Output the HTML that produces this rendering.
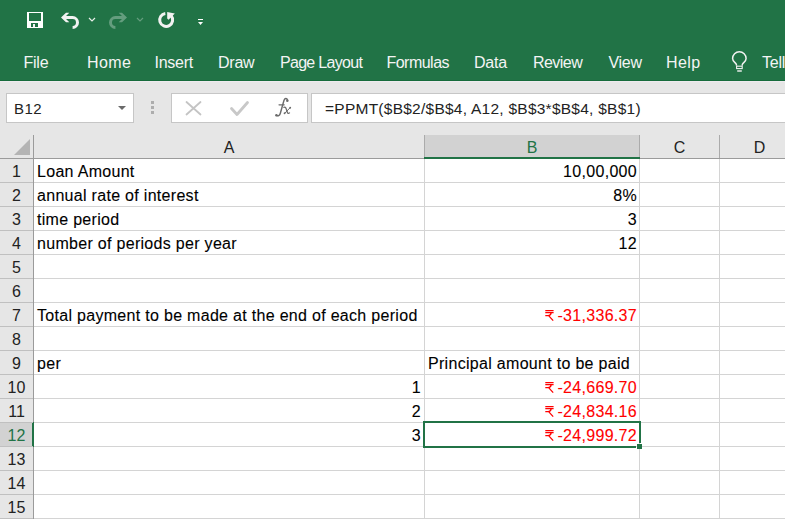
<!DOCTYPE html>
<html><head><meta charset="utf-8">
<style>
*{margin:0;padding:0;box-sizing:border-box}
html,body{width:785px;height:519px;overflow:hidden;background:#e6e6e6;font-family:"Liberation Sans",sans-serif;position:relative}
.a{position:absolute}
#rib{left:0;top:0;width:785px;height:80px;background:#217346}
#ribl{left:0;top:80px;width:785px;height:1px;background:#166b3b}
#ribw{left:0;top:81px;width:785px;height:1px;background:#eeeaee}
.tab{position:absolute;top:53px;color:#f4f4f4;font-size:16px;letter-spacing:-0.25px;white-space:nowrap;line-height:20px}
.box{position:absolute;background:#fff;border:1px solid #c6c6c6}
.ft{position:absolute;font-size:15.5px;letter-spacing:0.25px;color:#000;white-space:nowrap;line-height:20px}
#grid{left:0;top:135px;width:785px;height:384px;background:#fff}
.hl{position:absolute;height:1px;background:#d4d4d4}
.vl{position:absolute;width:1px;background:#d4d4d4}
.ct{position:absolute;font-size:16px;letter-spacing:0.3px;color:#000;-webkit-text-stroke:0.1px currentColor;white-space:nowrap;line-height:20px}
.rh{position:absolute;left:0;width:33px;text-align:center;font-size:16px;color:#222;line-height:24px;padding-top:1px}
.ch{position:absolute;top:136px;height:23px;text-align:center;font-size:16px;color:#222;line-height:24px}
.red{color:#ff0000}
</style></head><body>
<div id="rib" class="a"></div>
<div id="ribl" class="a"></div>
<div id="ribw" class="a"></div>

<!-- QAT icons -->
<svg class="a" style="left:0;top:0" width="220" height="40" viewBox="0 0 220 40">
  <!-- save -->
  <rect x="27" y="12" width="16" height="16" fill="#fff"/>
  <rect x="29" y="13" width="12" height="8" fill="#217346"/>
  <rect x="31" y="23" width="7" height="4" fill="#217346"/>
  <rect x="33" y="24" width="2" height="3" fill="#f4f4f4"/>
  <!-- undo -->
  <path d="M61 17.5 L66 12.7 L69.3 12.7 L64.5 17.5 L69.3 22.3 L66 22.3 Z" fill="#f2f2f2"/>
  <path d="M64 17.6 H72.6 A4.9 4.9 0 0 1 72.6 27.4" fill="none" stroke="#f2f2f2" stroke-width="3"/>
  <path d="M89 18 L92 21 L95 18" fill="none" stroke="#e8efe9" stroke-width="1.2"/>
  <!-- redo -->
  <g opacity="0.3" transform="translate(188 0) scale(-1 1)">
  <path d="M61 17.5 L66 12.7 L69.3 12.7 L64.5 17.5 L69.3 22.3 L66 22.3 Z" fill="#fff"/>
  <path d="M64 17.6 H72.6 A4.9 4.9 0 0 1 72.6 27.4" fill="none" stroke="#fff" stroke-width="3"/>
  </g>
  <path d="M137 18 L140 21 L143 18" fill="none" stroke="#fff" stroke-opacity="0.3" stroke-width="1.2"/>
  <!-- refresh -->
  <path d="M165.3 13.45 A6.5 6.5 0 1 0 171.2 15.8" fill="none" stroke="#f2f2f2" stroke-width="3"/>
  <path d="M167.2 12 L174.8 13.5 L168.6 19.8 L167.2 18.6 Z" fill="#f2f2f2"/>
  <!-- customize -->
  <rect x="198" y="19" width="5" height="1" fill="#fff"/>
  <path d="M198 22 L203 22 L200.5 25 Z" fill="#fff"/>
</svg>

<!-- tabs -->
<div class="tab" style="left:23.5px">File</div>
<div class="tab" style="left:87px;letter-spacing:0.4px">Home</div>
<div class="tab" style="left:154.5px">Insert</div>
<div class="tab" style="left:218px">Draw</div>
<div class="tab" style="left:280px;letter-spacing:-0.7px">Page Layout</div>
<div class="tab" style="left:386.4px;letter-spacing:-0.5px">Formulas</div>
<div class="tab" style="left:474px">Data</div>
<div class="tab" style="left:533px;letter-spacing:-0.55px">Review</div>
<div class="tab" style="left:608.4px">View</div>
<div class="tab" style="left:666px;letter-spacing:0.4px">Help</div>
<svg class="a" style="left:730px;top:50px" width="20" height="24" viewBox="0 0 20 24">
  <path d="M6.6 15.6 L6.2 14 C5.6 12.6 2.6 11.8 2.6 8.6 A6.75 6.75 0 0 1 16.1 8.6 C16.1 11.8 13.1 12.6 12.5 14 L12.1 15.6" fill="none" stroke="#f2f2f2" stroke-width="1.5"/>
  <rect x="6.6" y="16.2" width="5.6" height="2.4" fill="none" stroke="#f2f2f2" stroke-width="1.1"/>
  <rect x="7.2" y="20.3" width="4.6" height="1.4" fill="#f2f2f2"/>
</svg>
<div class="tab" style="left:762px">Tell me</div>

<!-- formula bar -->
<div class="box" style="left:6px;top:93px;width:128px;height:30px"></div>
<div class="ft" style="left:14px;top:99px;color:#222;font-size:15px;letter-spacing:0.4px">B12</div>
<svg class="a" style="left:117px;top:105px" width="10" height="6"><path d="M1 1 H9 L5 5 Z" fill="#6a6a6a"/></svg>
<div class="a" style="left:151px;top:101px;width:3px;height:3px;background:#adadad"></div>
<div class="a" style="left:151px;top:106px;width:3px;height:3px;background:#adadad"></div>
<div class="a" style="left:151px;top:111px;width:3px;height:3px;background:#adadad"></div>
<div class="box" style="left:171px;top:93px;width:137px;height:30px"></div>
<svg class="a" style="left:180px;top:96px" width="80" height="24" viewBox="0 0 80 24">
  <path d="M6.5 6 L20.5 18.5 M20.5 6 L6.5 18.5" stroke="#c4c4c4" stroke-width="1.8" stroke-linecap="round"/>
  <path d="M51.5 12.5 L57 18.5 L67.5 6.5" fill="none" stroke="#c8c8c8" stroke-width="2.8" stroke-linecap="round" stroke-linejoin="round"/>
</svg>
<svg class="a" style="left:270px;top:94px" width="24" height="26" viewBox="0 0 24 26">
  <g fill="none" stroke="#6b6b6b" stroke-linecap="round">
  <path d="M17.6 6.2 C16.8 3.9 14.6 4.1 13.9 6.6 L10.3 19.4 C9.7 21.8 7.9 22.3 6.7 21.3" stroke-width="1.5"/>
  <path d="M9 10.8 H14.2" stroke-width="1.2"/>
  <path d="M13.9 13.4 C14.9 12.7 15.7 13.3 16.2 14.9 L17.3 18.3 C17.7 19.6 18.6 19.8 19.5 18.9" stroke-width="1.3"/>
  <path d="M20.4 13.4 L14.6 19.4" stroke-width="1"/>
  </g>
  <g fill="#6b6b6b"><circle cx="17.3" cy="6.8" r="1.25"/><circle cx="6.4" cy="21.3" r="1.25"/><circle cx="20.2" cy="13.7" r="0.95"/><circle cx="14.6" cy="19.2" r="0.95"/></g>
</svg>
<div class="box" style="left:311px;top:93px;width:480px;height:30px"></div>
<div class="ft" style="left:325px;top:98.6px;color:#222">=PPMT($B$2/$B$4, A12, $B$3*$B$4, $B$1)</div>

<!-- grid -->
<div id="grid" class="a"></div>
<div class="a" style="left:0;top:135px;width:785px;height:23px;background:#e6e6e6"></div>
<div class="a" style="left:0;top:135px;width:33px;height:384px;background:#e6e6e6"></div>
<div class="a" style="left:425px;top:135px;width:214px;height:22px;background:#d2d2d2"></div>
<div class="a" style="left:0;top:423px;width:32px;height:23px;background:#d2d2d2"></div>
<svg class="a" style="left:0;top:135px" width="34" height="24"><path d="M14 20 L30 4 L30 20 Z" fill="#b4b4b4"/></svg>
<div class="a" style="left:0;top:158px;width:785px;height:1px;background:#9b9b9b"></div>
<div class="a" style="left:33px;top:135px;width:1px;height:384px;background:#9b9b9b"></div>
<div class="a" style="left:424px;top:135px;width:1px;height:23px;background:#ababab"></div>
<div class="a" style="left:639px;top:135px;width:1px;height:23px;background:#ababab"></div>
<div class="a" style="left:719px;top:135px;width:1px;height:23px;background:#ababab"></div>
<div class="a" style="left:424px;top:157px;width:216px;height:2px;background:#217346"></div>
<div class="a" style="left:32px;top:422px;width:2px;height:25px;background:#217346"></div>
<div class="a" style="left:0;top:182px;width:33px;height:1px;background:#c0c0c0"></div>
<div class="hl" style="left:34px;top:182px;width:751px"></div>
<div class="a" style="left:0;top:206px;width:33px;height:1px;background:#c0c0c0"></div>
<div class="hl" style="left:34px;top:206px;width:751px"></div>
<div class="a" style="left:0;top:230px;width:33px;height:1px;background:#c0c0c0"></div>
<div class="hl" style="left:34px;top:230px;width:751px"></div>
<div class="a" style="left:0;top:254px;width:33px;height:1px;background:#c0c0c0"></div>
<div class="hl" style="left:34px;top:254px;width:751px"></div>
<div class="a" style="left:0;top:278px;width:33px;height:1px;background:#c0c0c0"></div>
<div class="hl" style="left:34px;top:278px;width:751px"></div>
<div class="a" style="left:0;top:302px;width:33px;height:1px;background:#c0c0c0"></div>
<div class="hl" style="left:34px;top:302px;width:751px"></div>
<div class="a" style="left:0;top:326px;width:33px;height:1px;background:#c0c0c0"></div>
<div class="hl" style="left:34px;top:326px;width:751px"></div>
<div class="a" style="left:0;top:350px;width:33px;height:1px;background:#c0c0c0"></div>
<div class="hl" style="left:34px;top:350px;width:751px"></div>
<div class="a" style="left:0;top:374px;width:33px;height:1px;background:#c0c0c0"></div>
<div class="hl" style="left:34px;top:374px;width:751px"></div>
<div class="a" style="left:0;top:398px;width:33px;height:1px;background:#c0c0c0"></div>
<div class="hl" style="left:34px;top:398px;width:751px"></div>
<div class="a" style="left:0;top:422px;width:33px;height:1px;background:#c0c0c0"></div>
<div class="hl" style="left:34px;top:422px;width:751px"></div>
<div class="a" style="left:0;top:446px;width:33px;height:1px;background:#c0c0c0"></div>
<div class="hl" style="left:34px;top:446px;width:751px"></div>
<div class="a" style="left:0;top:470px;width:33px;height:1px;background:#c0c0c0"></div>
<div class="hl" style="left:34px;top:470px;width:751px"></div>
<div class="a" style="left:0;top:494px;width:33px;height:1px;background:#c0c0c0"></div>
<div class="hl" style="left:34px;top:494px;width:751px"></div>
<div class="a" style="left:0;top:518px;width:33px;height:1px;background:#c0c0c0"></div>
<div class="hl" style="left:34px;top:518px;width:751px"></div>
<div class="vl" style="left:424px;top:159px;height:360px"></div>
<div class="vl" style="left:639px;top:159px;height:360px"></div>
<div class="vl" style="left:719px;top:159px;height:360px"></div>
<div class="rh" style="top:159px;color:#222">1</div>
<div class="rh" style="top:183px;color:#222">2</div>
<div class="rh" style="top:207px;color:#222">3</div>
<div class="rh" style="top:231px;color:#222">4</div>
<div class="rh" style="top:255px;color:#222">5</div>
<div class="rh" style="top:279px;color:#222">6</div>
<div class="rh" style="top:303px;color:#222">7</div>
<div class="rh" style="top:327px;color:#222">8</div>
<div class="rh" style="top:351px;color:#222">9</div>
<div class="rh" style="top:375px;color:#222">10</div>
<div class="rh" style="top:399px;color:#222">11</div>
<div class="rh" style="top:423px;color:#217346">12</div>
<div class="rh" style="top:447px;color:#222">13</div>
<div class="rh" style="top:471px;color:#222">14</div>
<div class="rh" style="top:495px;color:#222">15</div>
<div class="ch" style="left:34px;width:390px">A</div>
<div class="ch" style="left:425px;width:214px;color:#217346">B</div>
<div class="ch" style="left:640px;width:79px">C</div>
<div class="ch" style="left:720px;width:79px">D</div>
<div class="ct" style="left:37px;top:162px">Loan Amount</div>
<div class="ct" style="left:37px;top:186px">annual rate of interest</div>
<div class="ct" style="left:37px;top:210px">time period</div>
<div class="ct" style="left:37px;top:234px">number of periods per year</div>
<div class="ct" style="left:37px;top:306px">Total payment to be made at the end of each period</div>
<div class="ct" style="left:37px;top:354px">per</div>
<div class="ct" style="right:148px;top:162px">10,00,000</div>
<div class="ct" style="right:148px;top:186px">8%</div>
<div class="ct" style="right:148px;top:210px">3</div>
<div class="ct" style="right:148px;top:234px">12</div>
<div class="ct red" style="right:148px;top:306px">-31,336.37</div>
<div class="ct red" style="right:148px;top:378px">-24,669.70</div>
<div class="ct red" style="right:148px;top:402px">-24,834.16</div>
<div class="ct red" style="right:148px;top:426px">-24,999.72</div>
<div class="ct" style="right:364px;top:378px">1</div>
<div class="ct" style="right:364px;top:402px">2</div>
<div class="ct" style="right:364px;top:426px">3</div>
<div class="ct" style="left:428px;top:354px">Principal amount to be paid</div>
<div class="a" style="left:423px;top:421px;width:218px;height:2px;background:#217346"></div>
<div class="a" style="left:423px;top:421px;width:2px;height:27px;background:#217346"></div>
<div class="a" style="left:423px;top:446px;width:213px;height:2px;background:#217346"></div>
<div class="a" style="left:639px;top:421px;width:2px;height:22px;background:#217346"></div>
<div class="a" style="left:637px;top:444px;width:5px;height:5px;background:#217346"></div>
<svg class="a" style="left:545px;top:310px" width="10" height="12" viewBox="0 0 10 12"><path d="M0.3 0.6 H8.6 M0.3 2.6 H8.6 M6.2 2.6 Q6 5.4 3.2 5.5 H0.3 M3.6 5.6 L8.2 10.6" fill="none" stroke="#f00" stroke-width="1.25"/></svg>
<svg class="a" style="left:545px;top:382px" width="10" height="12" viewBox="0 0 10 12"><path d="M0.3 0.6 H8.6 M0.3 2.6 H8.6 M6.2 2.6 Q6 5.4 3.2 5.5 H0.3 M3.6 5.6 L8.2 10.6" fill="none" stroke="#f00" stroke-width="1.25"/></svg>
<svg class="a" style="left:545px;top:406px" width="10" height="12" viewBox="0 0 10 12"><path d="M0.3 0.6 H8.6 M0.3 2.6 H8.6 M6.2 2.6 Q6 5.4 3.2 5.5 H0.3 M3.6 5.6 L8.2 10.6" fill="none" stroke="#f00" stroke-width="1.25"/></svg>
<svg class="a" style="left:545px;top:430px" width="10" height="12" viewBox="0 0 10 12"><path d="M0.3 0.6 H8.6 M0.3 2.6 H8.6 M6.2 2.6 Q6 5.4 3.2 5.5 H0.3 M3.6 5.6 L8.2 10.6" fill="none" stroke="#f00" stroke-width="1.25"/></svg>
</body></html>
